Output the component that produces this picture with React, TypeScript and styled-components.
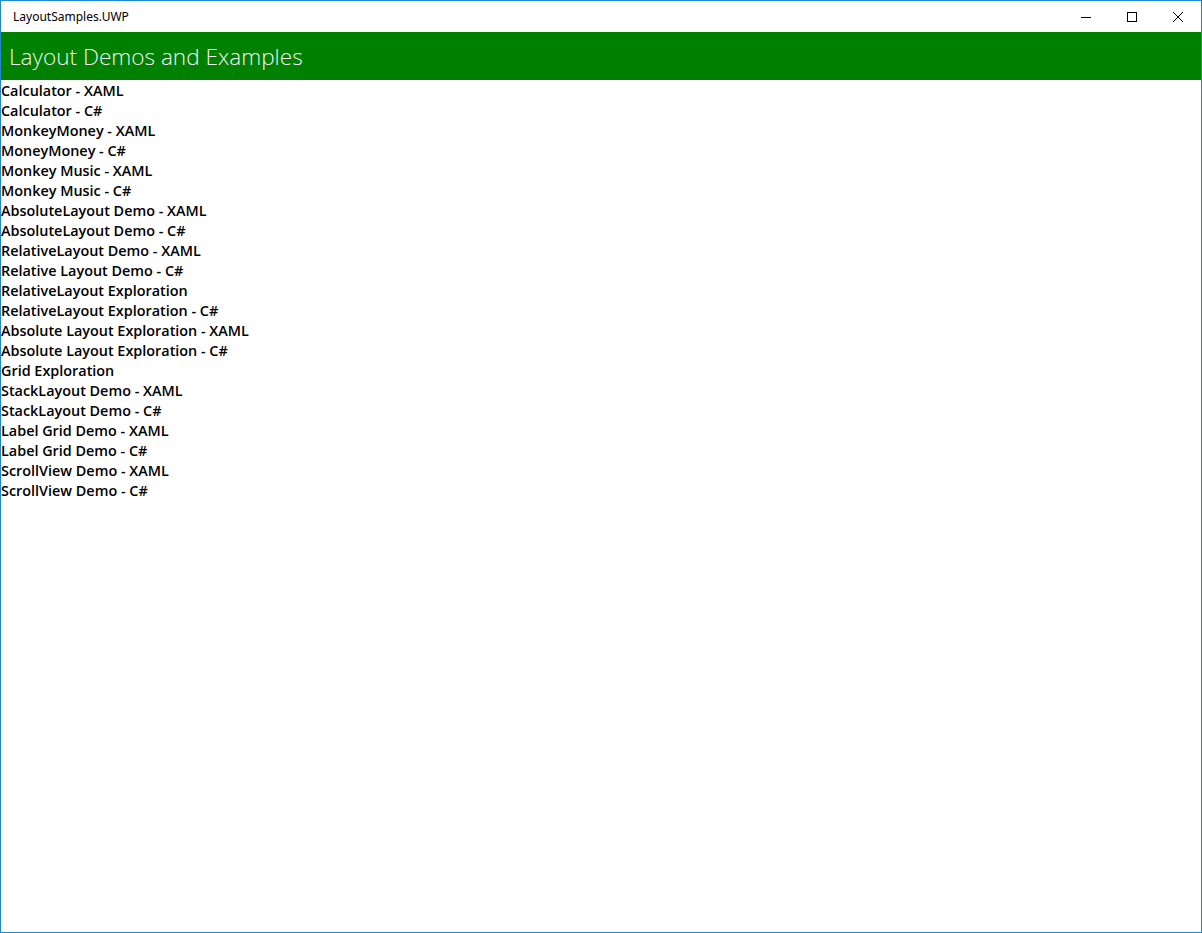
import React from 'react'
import styled, { createGlobalStyle } from 'styled-components'

const GlobalStyle = createGlobalStyle`
  html, body {
    margin: 0;
    padding: 0;
    background: #ffffff;
  }
  #root {
    height: 933px;
  }
`

const Window = styled.div`
  box-sizing: border-box;
  width: 1202px;
  height: 933px;
  border: 1px solid #1c86d8;
  display: flex;
  flex-direction: column;
  background: #ffffff;
  font-family: 'Open Sans', 'Noto Sans', sans-serif;
`

const TitleBar = styled.div`
  height: 31px;
  display: flex;
  align-items: center;
  justify-content: space-between;
  flex-shrink: 0;
`

const WindowTitle = styled.span`
  padding-left: 12px;
  font-size: 12px;
  color: #000000;
  font-family: 'Noto Sans', 'Open Sans', sans-serif;
`

const Controls = styled.div`
  display: flex;
  height: 100%;
`

const ControlButton = styled.div`
  width: 46px;
  height: 100%;
  display: flex;
  align-items: center;
  justify-content: center;
`

const Header = styled.div`
  height: 48px;
  background: #008000;
  display: flex;
  align-items: center;
  padding-left: 8px;
  flex-shrink: 0;
`

const HeaderTitle = styled.h1`
  margin: 0;
  font-size: 22.6px;
  font-weight: 300;
  color: #f2f2f2;
`

const List = styled.ul`
  list-style: none;
  margin: 0;
  padding: 1px 0 0;
`

const Item = styled.li`
  height: 20px;
  line-height: 20px;
  font-size: 14.4px;
  font-weight: 600;
  color: #000000;
  white-space: nowrap;
`

const items = [
  'Calculator - XAML',
  'Calculator - C#',
  'MonkeyMoney - XAML',
  'MoneyMoney - C#',
  'Monkey Music - XAML',
  'Monkey Music - C#',
  'AbsoluteLayout Demo - XAML',
  'AbsoluteLayout Demo - C#',
  'RelativeLayout Demo - XAML',
  'Relative Layout Demo - C#',
  'RelativeLayout Exploration',
  'RelativeLayout Exploration - C#',
  'Absolute Layout Exploration - XAML',
  'Absolute Layout Exploration - C#',
  'Grid Exploration',
  'StackLayout Demo - XAML',
  'StackLayout Demo - C#',
  'Label Grid Demo - XAML',
  'Label Grid Demo - C#',
  'ScrollView Demo - XAML',
  'ScrollView Demo - C#',
]

const App: React.FC = () => (
  <>
    <GlobalStyle />
    <Window>
      <TitleBar>
        <WindowTitle>LayoutSamples.UWP</WindowTitle>
        <Controls>
          <ControlButton>
            <svg width="10" height="10" viewBox="0 0 10 10">
              <path d="M0 5.5H10" stroke="#000" strokeWidth="1" />
            </svg>
          </ControlButton>
          <ControlButton>
            <svg width="10" height="10" viewBox="0 0 10 10">
              <rect x="0.5" y="0.5" width="9" height="9" fill="none" stroke="#000" strokeWidth="1" />
            </svg>
          </ControlButton>
          <ControlButton>
            <svg width="10" height="10" viewBox="0 0 10 10">
              <path d="M0 0L10 10M10 0L0 10" stroke="#000" strokeWidth="1" />
            </svg>
          </ControlButton>
        </Controls>
      </TitleBar>
      <Header>
        <HeaderTitle>Layout Demos and Examples</HeaderTitle>
      </Header>
      <List>
        {items.map((item) => (
          <Item key={item}>{item}</Item>
        ))}
      </List>
    </Window>
  </>
)

export default App
